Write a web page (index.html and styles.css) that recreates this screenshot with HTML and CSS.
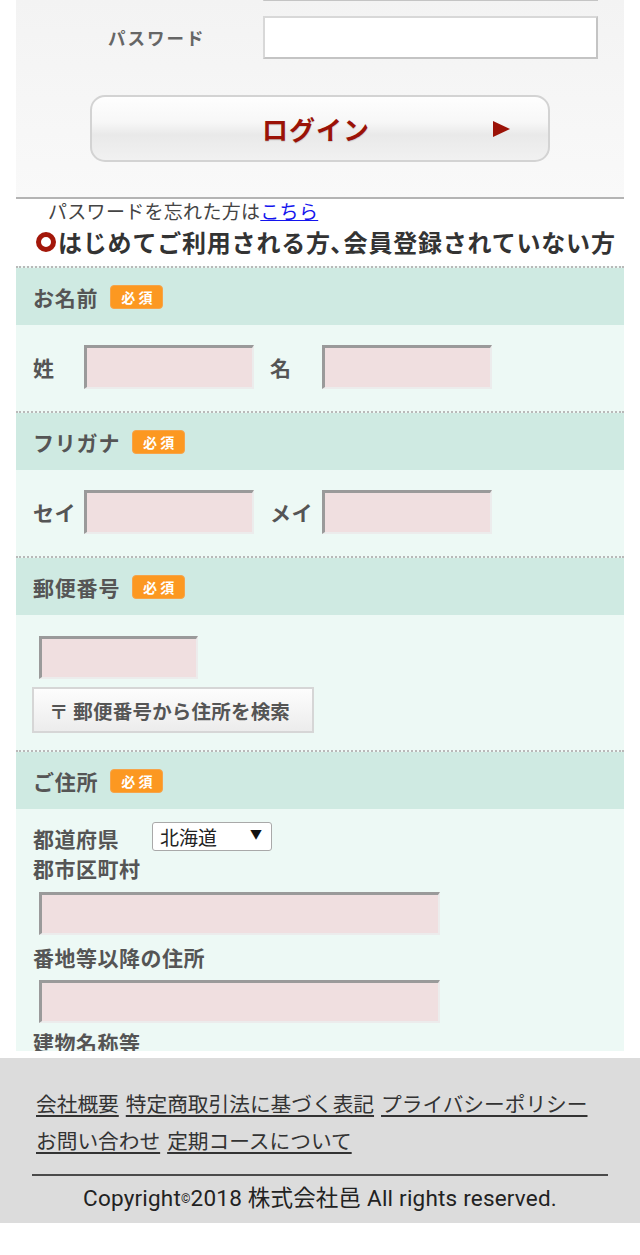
FILE: index.html
```html
<!DOCTYPE html>
<html lang="ja">
<head>
<meta charset="utf-8">
<title>会員登録</title>
<link rel="stylesheet" href="styles.css">
</head>
<body>
<div class="page">
  <main class="main">
    <section class="login">
      <div class="login-row login-row-first">
        <span class="login-label"></span>
        <span class="login-input"></span>
      </div>
      <div class="login-row">
        <span class="login-label">パスワード</span>
        <span class="login-input"></span>
      </div>
      <div class="login-btn">
        <span class="login-btn-text">ログイン</span>
        <span class="login-btn-arrow"></span>
      </div>
    </section>
    <p class="forgot">パスワードを忘れた方は<a href="#">こちら</a></p>
    <h2 class="new-title"><span class="ring"></span>はじめてご利用される方､会員登録されていない方</h2>

    <section class="field">
      <div class="field-head"><span class="field-title">お名前</span><span class="badge">必 須</span></div>
      <div class="field-body">
        <div class="pair">
          <span class="pair-label">姓</span><span class="txt txt-name"></span>
          <span class="pair-label pair-label-2">名</span><span class="txt txt-name"></span>
        </div>
      </div>
    </section>

    <section class="field">
      <div class="field-head"><span class="field-title">フリガナ</span><span class="badge">必 須</span></div>
      <div class="field-body">
        <div class="pair">
          <span class="pair-label">セイ</span><span class="txt txt-name"></span>
          <span class="pair-label pair-label-2">メイ</span><span class="txt txt-name"></span>
        </div>
      </div>
    </section>

    <section class="field">
      <div class="field-head"><span class="field-title">郵便番号</span><span class="badge">必 須</span></div>
      <div class="field-body field-body-zip">
        <span class="txt txt-zip"></span>
        <span class="zip-btn">〒 郵便番号から住所を検索</span>
      </div>
    </section>

    <section class="field">
      <div class="field-head"><span class="field-title">ご住所</span><span class="badge">必 須</span></div>
      <div class="field-body field-body-addr">
        <div class="pref-row">
          <span class="addr-label pref-label">都道府県</span>
          <span class="select">北海道</span>
        </div>
        <div class="addr-label">郡市区町村</div>
        <span class="txt txt-addr"></span>
        <div class="addr-label addr-label-gap">番地等以降の住所</div>
        <span class="txt txt-addr"></span>
        <div class="addr-label addr-label-gap2">建物名称等</div>
        <span class="txt txt-addr"></span>
      </div>
    </section>
  </main>

  <footer class="footer">
    <nav class="footer-links">
      <a href="#">会社概要</a>
      <a href="#">特定商取引法に基づく表記</a>
      <a href="#">プライバシーポリシー</a>
      <a href="#">お問い合わせ</a>
      <a href="#">定期コースについて</a>
    </nav>
    <p class="copyright">Copyright<span class="copy-mark">©</span>2018 株式会社邑 All rights reserved.</p>
  </footer>
</div>
</body>
</html>
```

FILE: styles.css
```css
* { box-sizing: border-box; }

html, body {
  margin: 0;
  padding: 0;
  background: #fff;
}

body {
  font-family: "Noto Sans CJK JP", "Noto Sans", sans-serif;
  color: #333;
  width: 640px;
}

.page {
  width: 640px;
}

.main {
  margin-left: 16px;
  width: 608px;
  height: 1051px;
  overflow: hidden;
}

/* login block */
.login {
  background: linear-gradient(#f3f3f3, #f9f9f9);
  border-bottom: 2px solid #b4b4b4;
  height: 199px;
  padding-left: 92px;
  overflow: hidden;
}

.login-row {
  display: flex;
  align-items: center;
  height: 43px;
  margin-top: 15px;
}

.login-row-first {
  margin-top: -42px;
}

.login-label {
  width: 155px;
  font-size: 17.5px;
  font-weight: 700;
  color: #666;
  letter-spacing: 2px;
}

.login-input {
  width: 335px;
  height: 43px;
  background: #fff;
  border: 2px solid #c4c4c4;
  border-top-color: #d8d8d8;
  border-left-color: #d8d8d8;
}

.login-btn {
  position: relative;
  margin-top: 36px;
  margin-left: -18px;
  width: 460px;
  height: 67px;
  border: 2px solid #d3d3d3;
  border-radius: 15px;
  background: linear-gradient(#fefefe 0%, #f7f7f7 40%, #e9e9e9 60%, #f1f1f1 100%);
  display: flex;
  align-items: center;
  justify-content: center;
}

.login-btn-text {
  font-size: 26px;
  font-weight: 700;
  color: #9b1207;
  letter-spacing: 1px;
  margin-left: -8px;
  text-shadow: 0 1px 1px rgba(0,0,0,0.15);
}

.login-btn-arrow {
  position: absolute;
  left: 401px;
  top: 24px;
  width: 0;
  height: 0;
  border-top: 8.5px solid transparent;
  border-bottom: 8.5px solid transparent;
  border-left: 17px solid #9b1207;
}

.forgot {
  margin: 0;
  padding-left: 32px;
  font-size: 19px;
  line-height: 24px;
  color: #444;
  font-weight: 400;
  letter-spacing: 0.3px;
}

.forgot a {
  color: #1414ee;
  text-decoration: underline;
}

.new-title {
  margin: 2px 0 7px;
  padding-left: 20px;
  display: flex;
  align-items: center;
  font-size: 24px;
  line-height: 34px;
  font-weight: 700;
  color: #333;
  white-space: nowrap;
  letter-spacing: 0.8px;
}

.ring {
  width: 20px;
  height: 20px;
  border: 5px solid #a3170a;
  border-radius: 50%;
  margin-right: 2px;
  flex: none;
}

/* form fields */
.field {
  border-top: 2px dotted #b9b9b9;
  background: #edf9f5;
}

.field-head {
  height: 57px;
  background: #cfeae2;
  display: flex;
  align-items: center;
  padding-left: 17px;
}

.field-title {
  font-size: 21px;
  font-weight: 700;
  color: #555;
  letter-spacing: 0.8px;
}

.badge {
  margin-left: 12px;
  width: 53px;
  height: 24px;
  background: #fc9821;
  border: 1px solid #f6a44a;
  border-radius: 4px;
  color: #fff;
  font-size: 14px;
  font-weight: 700;
  line-height: 22px;
  text-align: center;
  white-space: pre;
}

.field-body {
  height: 86px;
  padding: 20px 0 0 17px;
}

.pair {
  display: flex;
  align-items: center;
}

.pair-label {
  width: 51px;
  font-size: 21px;
  font-weight: 700;
  color: #555;
  letter-spacing: 0.5px;
}

.pair-label-2 {
  margin-left: 16px;
  width: 52px;
}

.txt {
  display: block;
  background: #f0dfe0;
  border-top: 3px solid #9a9a9a;
  border-left: 3px solid #9a9a9a;
  border-right: 2px solid #ececec;
  border-bottom: 2px solid #ececec;
}

.txt-name {
  width: 170px;
  height: 44px;
}

.field-body-zip {
  height: 135px;
  padding-top: 21px;
}

.txt-zip {
  width: 159px;
  height: 43px;
  margin-left: 6px;
}

.zip-btn {
  display: flex;
  align-items: center;
  margin-top: 8px;
  margin-left: -1px;
  width: 282px;
  height: 46px;
  padding-left: 15px;
  border: 2px solid #d6d6d6;
  background: linear-gradient(#fdfdfd, #ececec);
  font-size: 19.5px;
  font-weight: 700;
  color: #555;
  white-space: nowrap;
  letter-spacing: 0.2px;
}

.field-body-addr {
  height: auto;
  padding-top: 13px;
}

.pref-row {
  display: flex;
  align-items: center;
  height: 29px;
}

.addr-label {
  font-size: 21px;
  font-weight: 700;
  color: #555;
  line-height: 24px;
  letter-spacing: 0.5px;
}

.pref-label {
  width: 119px;
  line-height: 29px;
  padding-top: 4px;
}

.select {
  position: relative;
  display: block;
  width: 120px;
  height: 29px;
  background: #fff;
  border: 1px solid #a9a9a9;
  border-radius: 3px;
  padding-left: 7px;
  font-size: 19px;
  line-height: 27px;
  color: #222;
}

.select::after {
  content: "▼";
  position: absolute;
  right: 9px;
  top: 0;
  font-size: 12px;
  line-height: 22px;
  color: #111;
}

.pref-row + .addr-label {
  margin-top: 5px;
}

.txt-addr {
  width: 401px;
  height: 43px;
  margin-left: 6px;
  margin-top: 12px;
}

.addr-label-gap {
  margin-top: 10px;
}

.addr-label-gap + .txt-addr {
  margin-top: 11px;
}

.addr-label-gap2 {
  margin-top: 7px;
}

/* footer */
.footer {
  margin-top: 7px;
  width: 640px;
  height: 165px;
  background: #dcdcdc;
  padding: 29px 32px 0;
  font-family: Roboto, "Noto Sans CJK JP", sans-serif;
}

.footer-links {
  display: flex;
  flex-wrap: wrap;
  column-gap: 7px;
  padding-left: 4px;
  padding-bottom: 13px;
  border-bottom: 2px solid #4a4a4a;
}

.footer-links a {
  font-size: 20.7px;
  line-height: 37px;
  color: #333;
  text-decoration: underline;
  text-underline-offset: 3px;
}

.copyright {
  margin: 0;
  text-align: center;
  font-size: 22.5px;
  line-height: 44px;
  color: #222;
  letter-spacing: 0.2px;
}

.copy-mark {
  font-size: 12px;
  vertical-align: 3px;
}
```
